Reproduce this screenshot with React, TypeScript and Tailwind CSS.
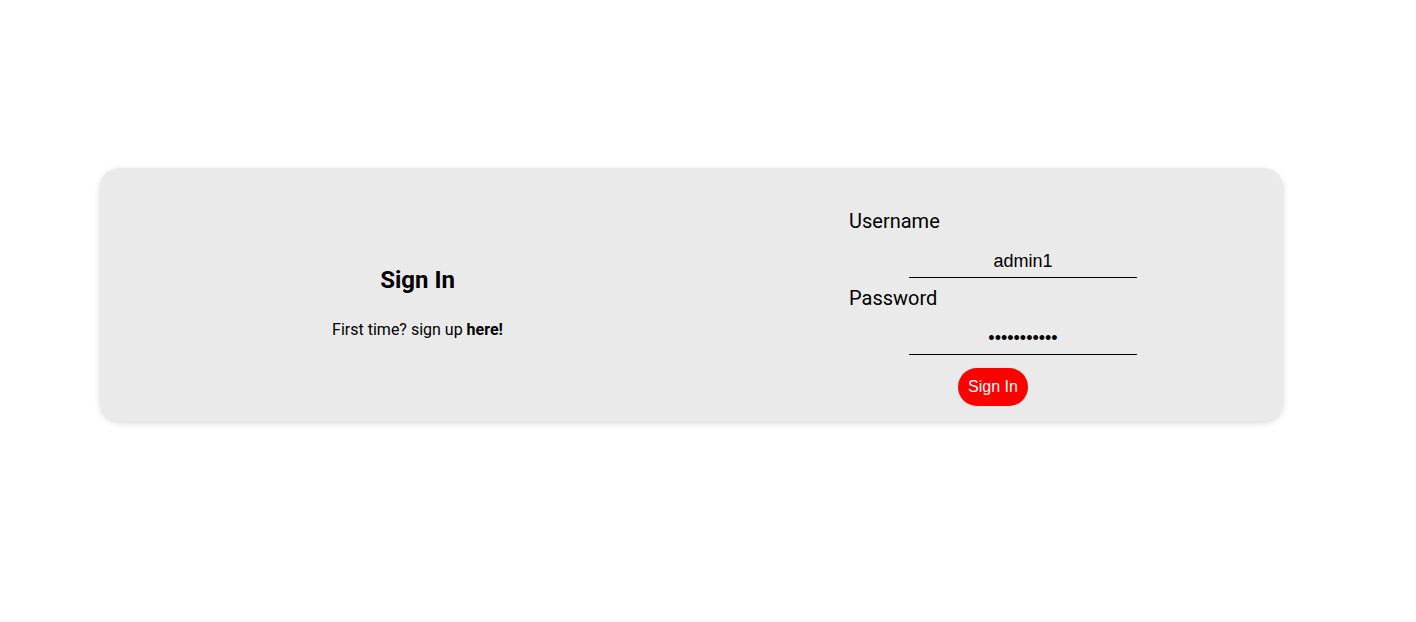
import React, { useState } from 'react';

export default function App() {
  const [username, setUsername] = useState<string>('admin1');
  const [password, setPassword] = useState<string>('admin12345!');

  const handleSubmit = (e: React.FormEvent) => {
    e.preventDefault();
  };

  return (
    <div className="min-h-[622px] w-full bg-white pt-[168px] font-['Roboto',sans-serif] text-black">
      {/* Card */}
      <div className="ml-[100px] flex h-[253px] w-[1183px] rounded-[20px] bg-[#eaeaea] shadow-[0_2px_6px_rgba(0,0,0,0.16)]">
        {/* Left side */}
        <div className="flex w-[635px] flex-col items-center pt-[96px]">
          <h1 className="text-[24px] leading-[32px] font-bold">Sign In</h1>
          <p className="mt-[22px] text-[16px] leading-[24px]">
            First time? sign up <span className="font-bold">here!</span>
          </p>
        </div>

        {/* Right side: form */}
        <form onSubmit={handleSubmit} className="ml-[114px] flex w-[288px] flex-col pt-[41px]">
          <label htmlFor="username" className="block text-[20px] leading-[24px]">
            Username
          </label>
          <input
            id="username"
            type="text"
            value={username}
            onChange={(e) => setUsername(e.target.value)}
            className="mt-[12px] ml-[60px] block h-[33px] w-[228px] border-b border-black bg-transparent text-center font-['Liberation_Sans',Arial,sans-serif] text-[18px] outline-none"
          />
          <label htmlFor="password" className="mt-[8px] block text-[20px] leading-[24px]">
            Password
          </label>
          <input
            id="password"
            type="password"
            value={password}
            onChange={(e) => setPassword(e.target.value)}
            className="mt-[12px] ml-[60px] block h-[33px] w-[228px] border-b border-black bg-transparent text-center font-['Liberation_Sans',Arial,sans-serif] text-[18px] outline-none"
          />
          <div className="mt-[13px] flex justify-center">
            <button
              type="submit"
              className="h-[38px] rounded-full bg-[#ff0000] px-[10px] font-['Liberation_Sans',Arial,sans-serif] text-[16px] text-white"
            >
              Sign In
            </button>
          </div>
        </form>
      </div>
    </div>
  );
}
